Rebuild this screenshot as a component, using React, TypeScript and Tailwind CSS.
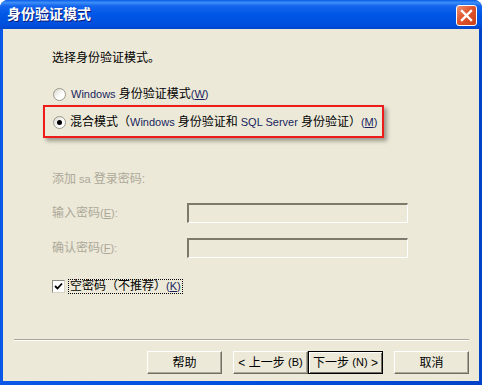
import React from "react";

const font = "[font-family:'Liberation_Sans','Noto_Sans_CJK_SC',sans-serif]";

// Latin runs are drawn a touch smaller than the CJK text, like Tahoma next to SimSun
function L({ children }: { children: React.ReactNode }) {
    return <span className="text-[11px] text-[#1a1f5e]">{children}</span>;
}

function Radio({ checked }: { checked?: boolean }) {
    return (
        <div className="w-[13px] h-[13px] shrink-0 rounded-full border border-[#9a988c] bg-[linear-gradient(135deg,#d6d4ca,#ffffff_60%)] flex items-center justify-center">
            {checked && <div className="w-[5px] h-[5px] rounded-full bg-black" />}
        </div>
    );
}

function Btn({ children, isDefault }: { children: React.ReactNode; isDefault?: boolean }) {
    return (
        <div
            className={`w-[75px] h-[23px] flex items-center justify-center whitespace-pre text-[12px] text-black bg-[#ECE9D8] ${
                isDefault
                    ? "border border-black shadow-[inset_1px_1px_0_#ffffff,inset_-1px_-1px_0_#716F64]"
                    : "border border-t-white border-l-white border-r-[#716F64] border-b-[#716F64] shadow-[inset_-1px_-1px_0_#ACA899]"
            }`}
        >
            {children}
        </div>
    );
}

function TextBox() {
    return <div className="w-[221px] h-[20px] bg-[#ECE9D8] border-t-2 border-l-2 border-t-[#7d7a6c] border-l-[#7d7a6c] border-b border-r border-b-white border-r-white" />;
}

export default function App() {
    return (
        <div className={`w-[482px] h-[385px] bg-white ${font}`}>
            <div className="w-full h-full flex flex-col rounded-t-[8px] overflow-hidden bg-[linear-gradient(to_right,#0A57E8,#0050DE_50%,#0043C9)]">
                {/* title bar */}
                <div className="h-[29px] shrink-0 flex items-start justify-between pl-[7px] pr-[5px] bg-[linear-gradient(to_bottom,#0A5CEA_0%,#3D8FF7_9%,#1566EE_20%,#0056E6_50%,#0050DD_85%,#0046CC_100%)]">
                    <span className="mt-[6px] text-[14px] leading-[17px] font-bold text-white [text-shadow:1px_1px_0_#0a1b78]">身份验证模式</span>
                    <div className="mt-[5px] w-[21px] h-[21px] rounded-[3px] border border-white bg-[linear-gradient(135deg,#F09272,#E0552E_45%,#C8401A)] flex items-center justify-center">
                        <svg width="13" height="13" viewBox="0 0 13 13">
                            <path d="M2 2 L11 11 M11 2 L2 11" stroke="white" strokeWidth="2.4" strokeLinecap="square" />
                        </svg>
                    </div>
                </div>

                {/* client area */}
                <div className="flex-1 mx-[3px] mb-[4px] bg-[#ECE9D8] flex flex-col text-[12px] text-black">
                    <div className="pl-[49px] pt-[21px] h-[37px] flex items-end leading-[16px]">选择身份验证模式。</div>

                    <div className="mt-[20px] pl-[50px] h-[16px] flex items-center gap-[5px] leading-[16px]">
                        <Radio />
                        <span>
                            <L>Windows </L>身份验证模式<L>(<u>W</u>)</L>
                        </span>
                    </div>

                    <div className="mt-[3px] ml-[40px] w-[341px] h-[33px] border-2 border-[#EE1B1B] shadow-[3px_3px_4px_rgba(0,0,0,0.35)] flex items-center pl-[8px] pt-[1px] gap-[4px] leading-[16px]">
                        <Radio checked />
                        <span className="whitespace-nowrap">
                            混合模式（<L>Windows </L>身份验证和<L> SQL Server </L>身份验证）<L>(<u>M</u>)</L>
                        </span>
                    </div>

                    <div className="mt-[33px] pl-[49px] h-[16px] flex items-center text-[#ACA899] leading-[16px]">
                        添加<span className="text-[11px]">&nbsp;sa&nbsp;</span>登录密码:
                    </div>

                    <div className="mt-[16px] pl-[49px] h-[20px] flex items-center text-[#ACA899]">
                        <span className="w-[135px]">
                            输入密码<span className="text-[11px]">(<u>E</u>):</span>
                        </span>
                        <TextBox />
                    </div>

                    <div className="mt-[15px] pl-[49px] h-[20px] flex items-center text-[#ACA899]">
                        <span className="w-[135px]">
                            确认密码<span className="text-[11px]">(<u>F</u>):</span>
                        </span>
                        <TextBox />
                    </div>

                    <div className="mt-[20px] pl-[49px] h-[16px] flex items-center gap-[3px]">
                        <div className="w-[13px] h-[13px] border border-t-[#8d8b80] border-l-[#8d8b80] border-b-[#d8d5c8] border-r-[#d8d5c8] bg-white flex items-center justify-center">
                            <svg width="9" height="9" viewBox="0 0 9 9">
                                <path d="M1 4 L3.5 6.5 L8 1.5" fill="none" stroke="black" strokeWidth="1.8" />
                            </svg>
                        </div>
                        <span className="px-[1px] border border-dotted border-black leading-[13px]">
                            空密码（不推荐）<L>(<u>K</u>)</L>
                        </span>
                    </div>

                    <div className="mt-[45px] mx-[11px] mr-[10px] h-[2px] border-t border-t-[#ACA899] border-b border-b-white" />

                    <div className="mt-[10px] pl-[144px] flex items-center">
                        <Btn>帮助</Btn>
                        <div className="ml-[11px]">
                            <Btn>&lt; 上一步 <span className="text-[11px]">(B)</span></Btn>
                        </div>
                        <Btn isDefault>下一步 <span className="text-[11px]">(N)</span> &gt;</Btn>
                        <div className="ml-[11px]">
                            <Btn>取消</Btn>
                        </div>
                    </div>
                </div>
            </div>
        </div>
    );
}
